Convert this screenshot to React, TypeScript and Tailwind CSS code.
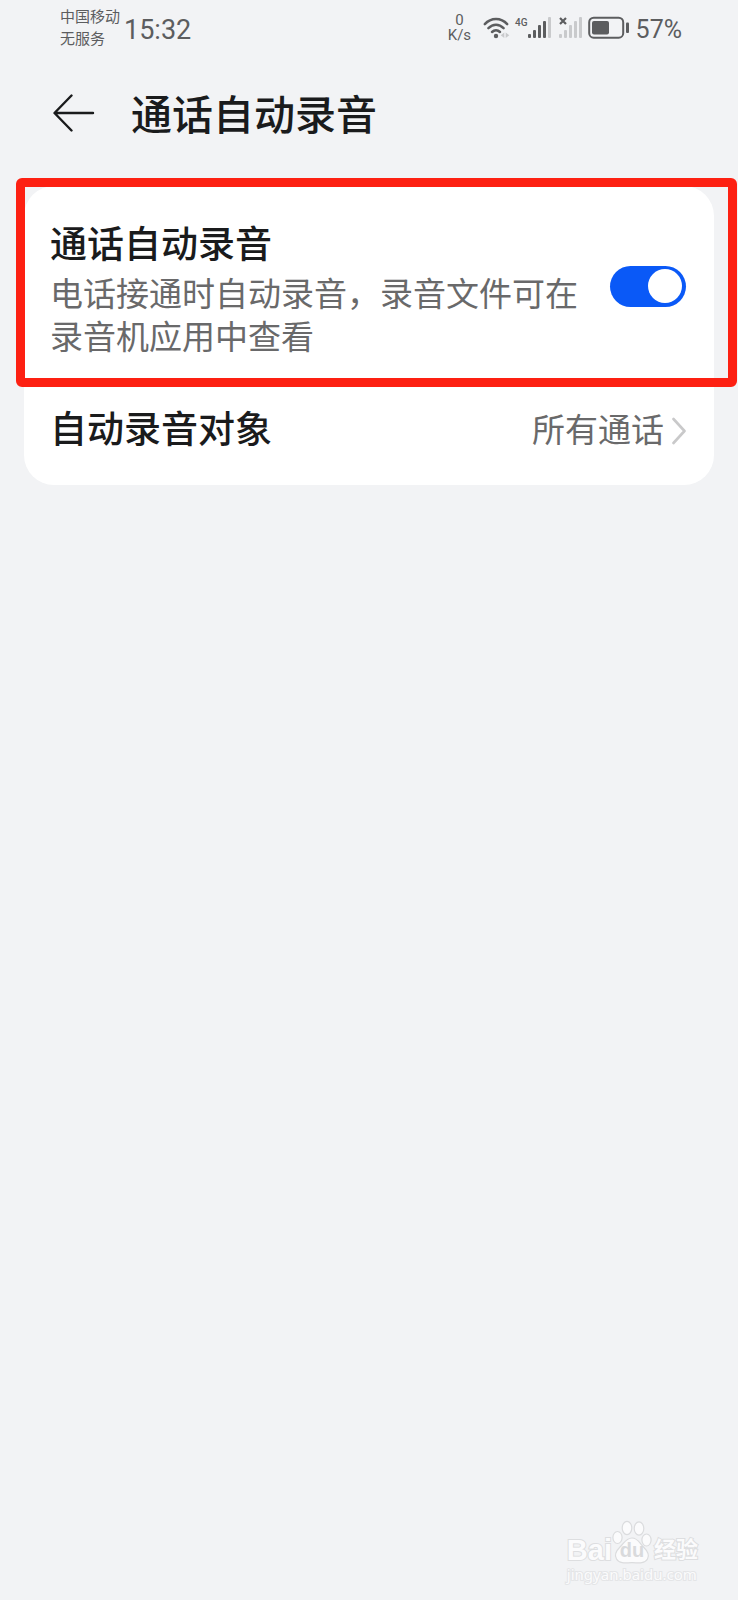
import { useState } from "react";

const cjk = "font-['Roboto','Noto_Sans_CJK_SC',sans-serif]";

function WifiIcon() {
  return (
    <svg width="28" height="24" viewBox="0 0 28 24" fill="none" aria-hidden="true">
      <g stroke="#5c5d5f" strokeWidth="2.5" strokeLinecap="round">
        <path d="M1.8 8.2 C8 1.4 18 1.4 24.2 8.2" />
        <path d="M5.4 12.2 C10 7.6 16 7.6 20.6 12.2" />
        <path d="M9 16 C11.4 13.7 14.6 13.7 17 16" />
      </g>
      <circle cx="13" cy="20" r="2.2" fill="#5c5d5f" />
      <path d="M21.3 16.5v5.4l-3.6-2.7zM22.7 16.5v5.4l3.6-2.7z" fill="#c9cacc" />
    </svg>
  );
}

function SignalBars({ active }: { active: number }) {
  const heights = [4, 8, 13, 17, 21];
  return (
    <svg width="23" height="22" viewBox="0 0 23 22" aria-hidden="true">
      {heights.map((h, i) => (
        <rect key={h} x={i * 5} y={21 - h} width="3" height={h} rx="1" fill={i < active ? "#5c5d5f" : "#c9cacc"} />
      ))}
    </svg>
  );
}

function BatteryIcon() {
  return (
    <svg width="42" height="24" viewBox="0 0 42 24" aria-hidden="true">
      <rect x="1.2" y="1.7" width="34" height="20" rx="4.5" fill="none" stroke="#5c5d5f" strokeWidth="2" />
      <rect x="4" y="5" width="17" height="13.5" rx="2" fill="#5c5d5f" />
      <rect x="38" y="6.5" width="3" height="10.5" rx="1" fill="#5c5d5f" />
    </svg>
  );
}

function StatusBar() {
  return (
    <div className="flex h-14 items-center justify-between pr-14 pl-15 text-[#5c5d5f]">
      <div className="flex items-center gap-1">
        <div className="text-[15px] leading-[22px]">
          <div>中国移动</div>
          <div>无服务</div>
        </div>
        <div className="pt-1 text-[27px] leading-8">15:32</div>
      </div>
      <div className="flex items-center">
        <div className="mr-3 text-center text-[15px] leading-[15px]">
          <div>0</div>
          <div>K/s</div>
        </div>
        <WifiIcon />
        <div className="ml-1 flex items-start">
          <span className="text-[10px] leading-3 font-medium">4G</span>
          <SignalBars active={4} />
        </div>
        <div className="relative ml-2">
          <SignalBars active={0} />
          <svg className="absolute top-0 left-0" width="8" height="8" viewBox="0 0 8 8" aria-hidden="true">
            <path d="M1 1l6 6M7 1l-6 6" stroke="#5c5d5f" strokeWidth="2.2" />
          </svg>
        </div>
        <div className="ml-1.5">
          <BatteryIcon />
        </div>
        <span className="ml-1.5 pt-1 text-[25px] leading-8">57%</span>
      </div>
    </div>
  );
}

function Watermark() {
  return (
    <div className="flex flex-col items-start text-[#fbfbfc]" lang="zh">
      <div className="flex items-end">
        <span className="font-['Liberation_Sans',sans-serif] text-[29px] leading-7 font-bold [paint-order:stroke_fill] [-webkit-text-stroke:2px_#dddee0]">
          Bai
        </span>
        <div className="relative h-11 w-10">
          <svg width="40" height="44" viewBox="0 0 40 44" fill="#fbfbfc" stroke="#dbdcde" strokeWidth="1.2" aria-hidden="true">
            <ellipse cx="5.5" cy="17.5" rx="4.6" ry="6" />
            <ellipse cx="15" cy="8" rx="4.8" ry="6.6" />
            <ellipse cx="27" cy="8.5" rx="4.8" ry="6.6" />
            <ellipse cx="34.5" cy="20" rx="4.6" ry="6" />
            <path d="M20 18c-6 0-8 5-12 9-4 4-6 8-3.500 12 2.500 4.500 8 4 15.500 3.500 7.500.5 13 1 15.500-3.500 2.500-4 0-8-4-12-4-4-5.500-9-11.500-9z" />
          </svg>
          <span className="absolute inset-x-0 bottom-1 text-center font-['Liberation_Sans',sans-serif] text-[20px] leading-5 font-bold text-[#d9dadc]">
            du
          </span>
        </div>
        <span className="ml-0.5 text-[22px] leading-7 font-bold [paint-order:stroke_fill] [-webkit-text-stroke:2px_#dddee0]">
          经验
        </span>
      </div>
      <span className="font-['Noto_Sans',sans-serif] text-[15px] leading-5 [paint-order:stroke_fill] [-webkit-text-stroke:2px_#e4e5e7]">
        jingyan.baidu.com
      </span>
    </div>
  );
}

export default function App() {
  const [enabled, setEnabled] = useState(true);

  return (
    <div className={`flex min-h-screen flex-col bg-[#f2f3f5] text-[#1a1b1c] ${cjk}`} lang="zh-CN">
      <StatusBar />

      <header className="flex h-[114px] items-center gap-9 pl-[53px]">
        <button type="button" aria-label="返回">
          <svg width="42" height="38" viewBox="0 0 42 38" fill="none" stroke="#1a1b1c" strokeWidth="2.4" strokeLinecap="round" strokeLinejoin="round" aria-hidden="true">
            <path d="M40 19H2M18.5 1.5L1.5 19l17 17.5" />
          </svg>
        </button>
        <h1 className="pt-1.5 text-[41px] leading-12 font-medium">通话自动录音</h1>
      </header>

      <main className="mt-4 mr-6 ml-6 rounded-[30px] bg-white">
        <div className="relative flex h-[194px] items-center justify-between pt-1.5 pr-7 pl-[26px]">
          <div className="pointer-events-none absolute -top-2 -right-[23px] -bottom-[7px] -left-2 rounded-md border-9 border-[#fd2012]" />
          <label htmlFor="auto-record" className="w-[530px] pt-1.5">
            <span className="block text-[37px] leading-[54px] font-medium">通话自动录音</span>
            <span className="block text-[33px] leading-[43px] text-[#69696a]">
              电话接通时自动录音，录音文件可在录音机应用中查看
            </span>
          </label>
          <input
            id="auto-record"
            type="checkbox"
            role="switch"
            checked={enabled}
            onChange={() => setEnabled(!enabled)}
            className="flex h-[41px] w-[76px] shrink-0 appearance-none items-center justify-start rounded-full bg-[#c8c9cb] p-1 before:size-[34px] before:rounded-full before:bg-white checked:justify-end checked:bg-[#0a59f7]"
          />
        </div>
        <button type="button" className="flex h-[105px] w-full items-center justify-between pr-7 pb-1 pl-[26px]">
          <span className="text-[37px] font-medium">自动录音对象</span>
          <span className="flex items-center gap-2 text-[33px] text-[#69696a]">
            所有通话
            <svg width="14" height="28" viewBox="0 0 14 28" fill="none" stroke="#c9c9ca" strokeWidth="2.6" strokeLinecap="round" strokeLinejoin="round" aria-hidden="true">
              <path d="M1.5 2L12.5 14L1.5 26" />
            </svg>
          </span>
        </button>
      </main>

      <footer className="mt-auto flex justify-end pr-10 pb-4">
        <Watermark />
      </footer>
    </div>
  );
}
